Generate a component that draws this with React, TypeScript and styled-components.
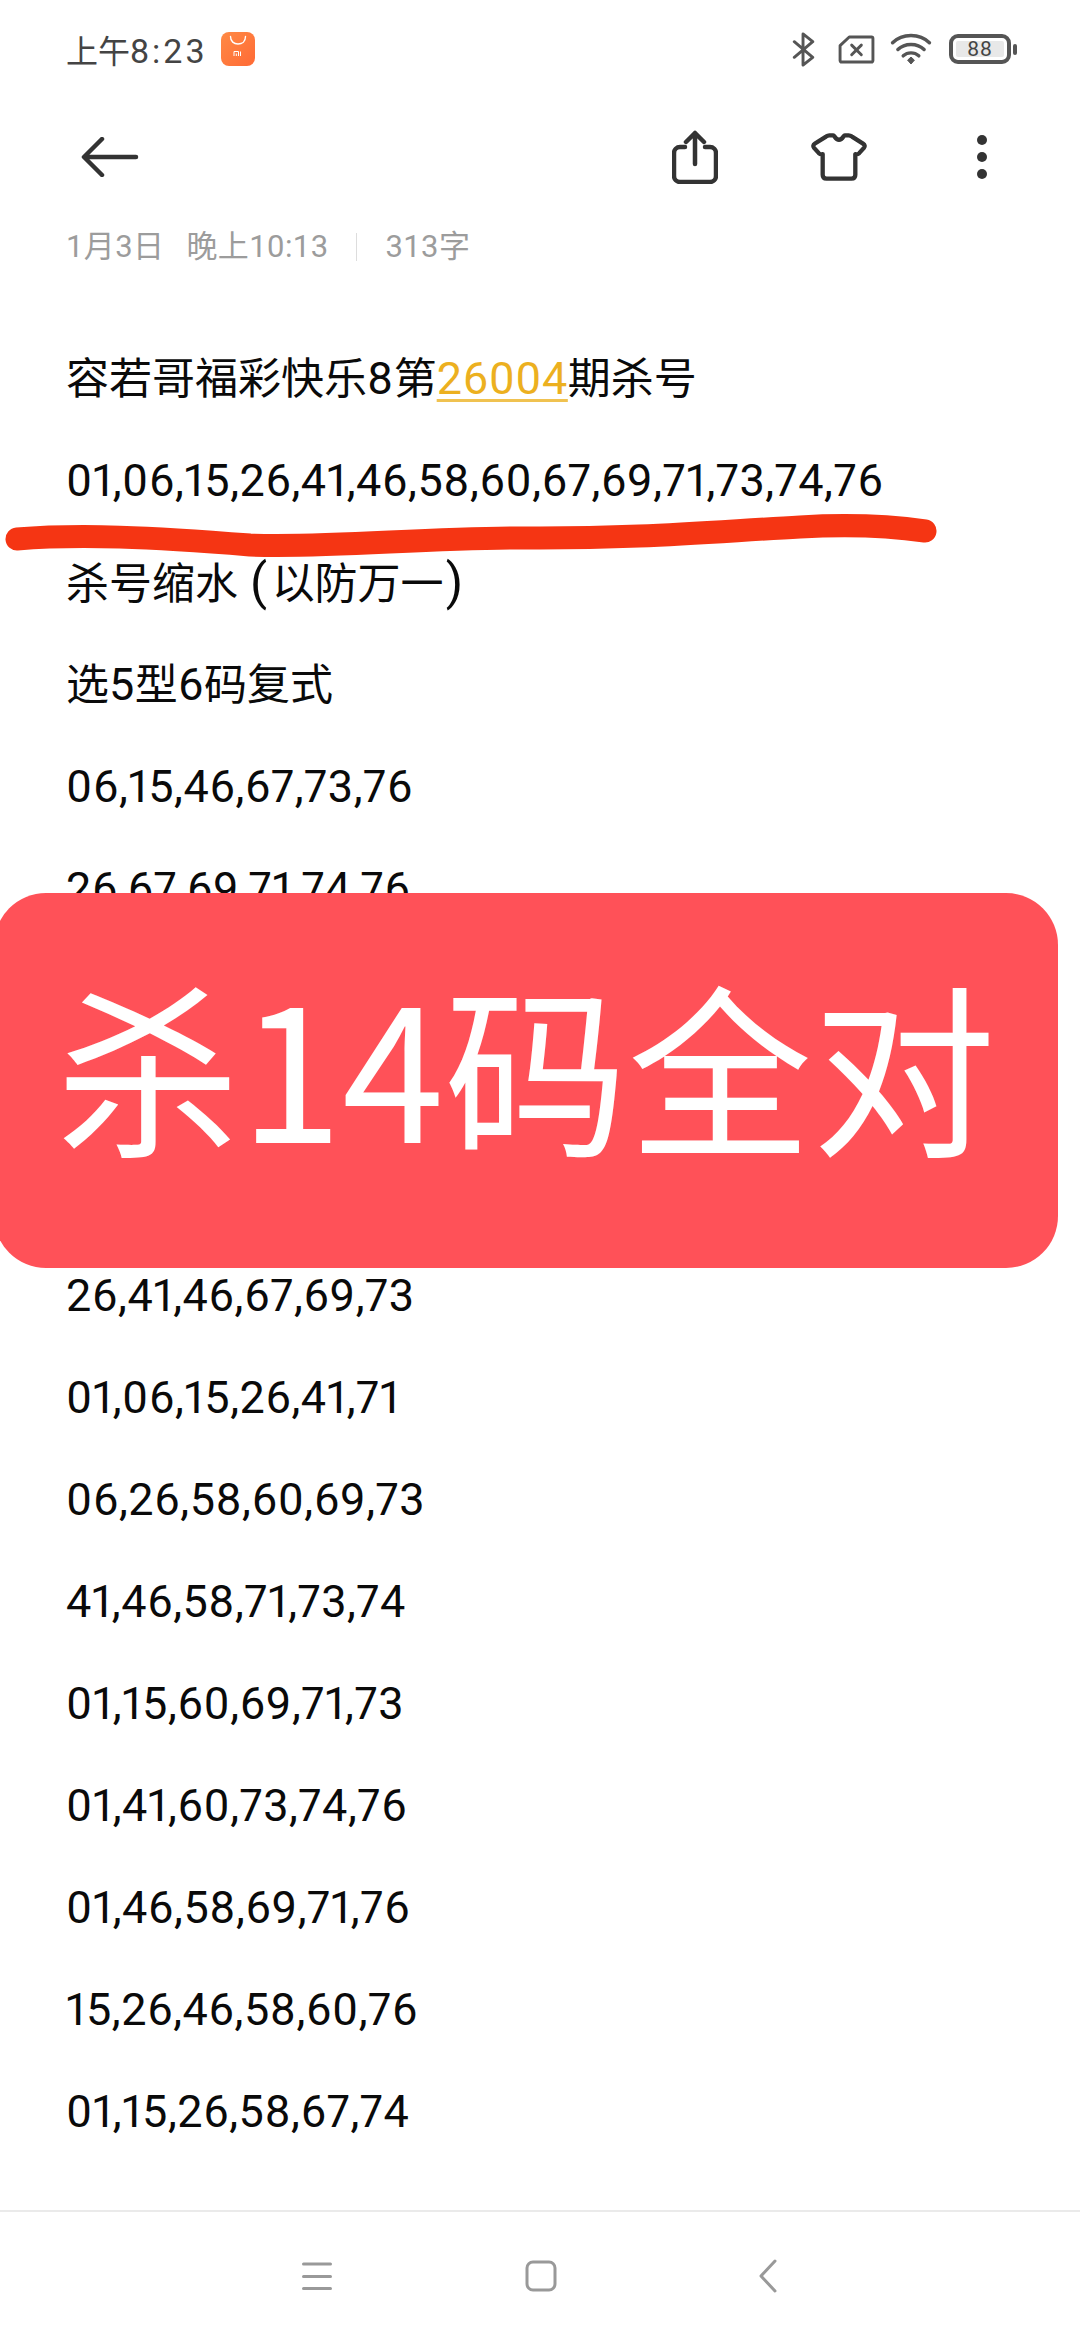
import React from "react";
import styled, { createGlobalStyle } from "styled-components";

const Global = createGlobalStyle`
  html, body { margin: 0; padding: 0; background: #fff; }
  #root { width: 1080px; height: 2340px; }
`;

const FONT = `Roboto, "Noto Sans CJK SC", sans-serif`;

const Page = styled.div`
  position: relative;
  width: 1080px;
  height: 2340px;
  overflow: hidden;
  display: flex;
  flex-direction: column;
  background: #fff;
  font-family: ${FONT};
`;

const StatusBar = styled.div`
  height: 96px;
  display: flex;
  align-items: center;
  padding: 2px 63px 0 66px;
  box-sizing: border-box;
  color: #444;
`;

const Clock = styled.span`
  font-size: 34px;
  letter-spacing: 3px;
`;

const ClockHan = styled.span`
  font-size: 32px;
  letter-spacing: 0;
`;

const Glyph = styled.svg<{ $gap?: number }>`
  display: block;
  flex: none;
  margin-left: ${(p) => p.$gap ?? 0}px;
`;

const Spring = styled.div`
  flex: 1;
`;

const Battery = styled.div`
  margin-left: 17px;
  width: 62px;
  height: 30px;
  box-sizing: border-box;
  border: 4px solid #555;
  border-radius: 9px;
  padding: 3px;
  display: flex;
`;

const BatteryFill = styled.div`
  flex: 1;
  background: #e8e8e8;
  border-radius: 2px;
  display: flex;
  align-items: center;
  justify-content: center;
  font-size: 21px;
  letter-spacing: 1px;
  color: #444;
  line-height: 1;
`;

const BatteryNub = styled.div`
  width: 4px;
  height: 11px;
  margin-left: 2px;
  border-radius: 2px;
  background: #555;
`;

const Toolbar = styled.div`
  height: 122px;
  display: flex;
  align-items: center;
  padding: 0 93px 0 81px;
  box-sizing: border-box;
`;

const Meta = styled.div`
  height: 38px;
  margin-top: 10px;
  display: flex;
  align-items: center;
  padding-left: 66px;
  font-size: 31px;
  letter-spacing: 0.4px;
  color: #9c9c9c;
  line-height: 38px;
`;

const MetaDate = styled.span`
  margin-right: 22px;
`;

const MetaDivider = styled.span`
  width: 1px;
  height: 28px;
  background: #ddd;
  margin: 0 28px;
`;

const Body = styled.div`
  margin-top: 62px;
  padding-left: 66px;
  display: flex;
  flex-direction: column;
`;

const Line = styled.div`
  height: 101.95px;
  line-height: 101.95px;
  font-size: 45px;
  font-variant-numeric: proportional-nums;
  letter-spacing: 0.5px;
  color: #0a0a0a;
  white-space: nowrap;
`;

const Han = styled.span`
  font-size: 43px;
  letter-spacing: 0;
`;

const Paren = styled.span<{ $before?: number; $after?: number }>`
  font-size: 50px;
  margin-left: ${(p) => p.$before ?? 0}px;
  margin-right: ${(p) => p.$after ?? 0}px;
`;

const IssueLink = styled.span`
  color: #ecb01f;
  text-decoration: underline;
  text-decoration-color: #f0c250;
  text-decoration-thickness: 3px;
  text-underline-offset: 5px;
`;

const CoveredGap = styled.div`
  height: 305.85px;
`;

const Banner = styled.div`
  position: absolute;
  left: -6px;
  top: 893px;
  width: 1064px;
  height: 375px;
  box-sizing: border-box;
  padding-bottom: 36px;
  border-radius: 52px;
  background: #ff5158;
  color: #fff;
  display: flex;
  align-items: center;
  justify-content: center;
  font-family: "Noto Sans CJK SC", sans-serif;
  font-size: 184px;
  line-height: 1;
  white-space: nowrap;
`;

const Scribble = styled.svg`
  position: absolute;
  left: 0;
  top: 500px;
`;

const NavBar = styled.div`
  margin-top: auto;
  height: 130px;
  box-sizing: border-box;
  border-top: 2px solid #eaeaea;
  display: flex;
  align-items: center;
  padding-left: 302px;
`;

const numbers = ["06,15,46,67,73,76", "26,67,69,71,74,76"];
const lower = [
  "26,41,46,67,69,73",
  "01,06,15,26,41,71",
  "06,26,58,60,69,73",
  "41,46,58,71,73,74",
  "01,15,60,69,71,73",
  "01,41,60,73,74,76",
  "01,46,58,69,71,76",
  "15,26,46,58,60,76",
  "01,15,26,58,67,74",
];

export default function App() {
  return (
    <Page>
      <Global />
      <StatusBar>
        <Clock>
          <ClockHan>上午</ClockHan>8:23
        </Clock>
        <Glyph $gap={13} width="34" height="34" viewBox="0 0 34 34">
          <defs>
            <linearGradient id="mi" x1="0" y1="0" x2="1" y2="1">
              <stop offset="0" stopColor="#ff8a45" />
              <stop offset="1" stopColor="#ff6a35" />
            </linearGradient>
          </defs>
          <rect width="34" height="34" rx="8" fill="url(#mi)" />
          <path d="M9.500 4.500c0 5 3.500 7.500 7.500 7.500s7.500-2.500 7.500-7.500" fill="none" stroke="#fff" strokeWidth="1.400" strokeLinecap="round" />
          <path d="M13 24v-4.500h4.500V24M15.300 21.500V24M19.500 19.500V24" fill="none" stroke="#fff" strokeWidth="1" />
        </Glyph>
        <Spring />
        <Glyph width="24" height="35" viewBox="0 0 24 36">
          <path d="M2 10l19 16-10 8V2l10 8L2 26" fill="none" stroke="#555" strokeWidth="3" strokeLinejoin="round" strokeLinecap="round" />
        </Glyph>
        <Glyph $gap={22} width="37" height="29" viewBox="0 0 37 30">
          <path d="M11 2h23a1.500 1.500 0 0 1 1.500 1.500v23A1.500 1.500 0 0 1 34 28H3a1.500 1.500 0 0 1-1.500-1.500V11z" fill="none" stroke="#555" strokeWidth="3" strokeLinejoin="round" />
          <path d="M13.500 10.500l10 10M23.500 10.500l-10 10" stroke="#555" strokeWidth="3" strokeLinecap="round" />
        </Glyph>
        <Glyph $gap={15} width="42" height="32" viewBox="0 0 42 33">
          <path d="M2 10C12 0 30 0 40 10M7.500 17c7-7 20-7 27 0M13 23.500c4.500-4 11.500-4 16 0" fill="none" stroke="#555" strokeWidth="3.600" strokeLinecap="round" />
          <path d="M17.500 28L21 24.800 24.500 28 21 32z" fill="#555" stroke="#555" strokeLinejoin="round" />
        </Glyph>
        <Battery>
          <BatteryFill>88</BatteryFill>
        </Battery>
        <BatteryNub />
      </StatusBar>

      <Toolbar>
        <svg width="58" height="40" viewBox="0 0 58 40">
          <path d="M21 2L3 20l18 18M3.500 20H55" fill="none" stroke="#333" strokeWidth="4.500" strokeLinecap="round" strokeLinejoin="round" />
        </svg>
        <Spring />
        <svg width="46" height="54" viewBox="0 0 46 54">
          <path d="M13 17H8a6 6 0 0 0-6 6v23a6 6 0 0 0 6 6h30a6 6 0 0 0 6-6V23a6 6 0 0 0-6-6h-5" fill="none" stroke="#333" strokeWidth="4.500" strokeLinecap="round" />
          <path d="M23 34V3M14 12l9-9 9 9" fill="none" stroke="#333" strokeWidth="4.500" strokeLinecap="round" strokeLinejoin="round" />
        </svg>
        <Glyph $gap={92} width="58" height="48" viewBox="0 0 58 50">
          <path d="M19 2.500h4c1.500 0 2 4.500 6 4.500s4.500-4.500 6-4.500h4c1.500 0 2.500.5 3.500 1.200L54 11c2 1.300 2.300 3 1 4.500l-5 5.500c-1 1-2.500 1.500-4 1v21.500c0 2.500-1.500 4-4 4H16c-2.500 0-4-1.500-4-4V22c-1.500.5-3 0-4-1l-5-5.500c-1.300-1.500-1-3.200 1-4.500l11.500-7.300c1-.7 2-1.200 3.500-1.200z" fill="none" stroke="#333" strokeWidth="4.500" strokeLinejoin="round" />
        </Glyph>
        <Glyph $gap={109} width="10" height="44" viewBox="0 0 10 44">
          <circle cx="5" cy="5" r="5" fill="#333" />
          <circle cx="5" cy="22" r="5" fill="#333" />
          <circle cx="5" cy="39" r="5" fill="#333" />
        </Glyph>
      </Toolbar>

      <Meta>
        <MetaDate>1月3日</MetaDate>
        <span>晚上10:13</span>
        <MetaDivider />
        <span>313字</span>
      </Meta>

      <Body>
        <Line>
          <Han>容若哥福彩快乐</Han>8<Han>第</Han>
          <IssueLink>26004</IssueLink>
          <Han>期杀号</Han>
        </Line>
        <Line>01,06,15,26,41,46,58,60,67,69,71,73,74,76</Line>
        <Line>
          <Han>杀号缩水</Han>
          <Paren $before={12} $after={4}>(</Paren>
          <Han>以防万一</Han>
          <Paren $before={2}>)</Paren>
        </Line>
        <Line>
          <Han>选</Han>5<Han>型</Han>6<Han>码复式</Han>
        </Line>
        {numbers.map((n) => (
          <Line key={n}>{n}</Line>
        ))}
        <CoveredGap />
        {lower.map((n) => (
          <Line key={n}>{n}</Line>
        ))}
      </Body>

      <Scribble width="950" height="70" viewBox="0 500 950 70">
        <path d="M17 539C80 534 150 537 250 545C330 548 420 538 520 538C640 539 720 531 800 527C850 524 890 526 925 531" fill="none" stroke="#f53513" strokeWidth="23" strokeLinecap="round" />
      </Scribble>

      <Banner>杀14码全对</Banner>

      <NavBar>
        <svg width="30" height="30" viewBox="0 0 30 30">
          <path d="M1.500 3h27M1.500 15.500h27M1.500 27.500h27" stroke="#999" strokeWidth="3" strokeLinecap="round" />
        </svg>
        <Glyph $gap={193} width="32" height="32" viewBox="0 0 32 32">
          <rect x="2" y="2" width="28" height="28" rx="6" fill="none" stroke="#999" strokeWidth="3" />
        </Glyph>
        <Glyph $gap={202} width="18" height="34" viewBox="0 0 18 34">
          <path d="M16 2L2 17l14 15" fill="none" stroke="#999" strokeWidth="3" strokeLinecap="round" strokeLinejoin="round" />
        </Glyph>
      </NavBar>
    </Page>
  );
}
